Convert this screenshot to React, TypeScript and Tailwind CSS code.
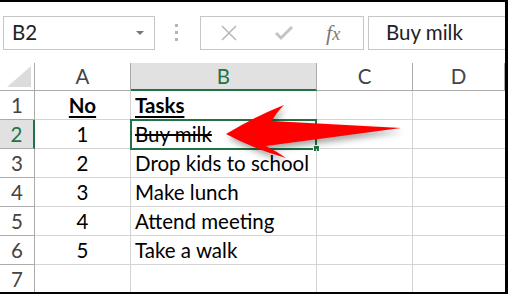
import React from "react";

const rows = [
  { n: 1, a: "No", b: "Tasks", head: true },
  { n: 2, a: "1", b: "Buy milk", done: true },
  { n: 3, a: "2", b: "Drop kids to school" },
  { n: 4, a: "3", b: "Make lunch" },
  { n: 5, a: "4", b: "Attend meeting" },
  { n: 6, a: "5", b: "Take a walk" },
  { n: 7, a: "", b: "" },
];

const cols = ["A", "B", "C", "D"];

function Toolbar() {
  return (
    <div className="flex h-[61px] items-center bg-white pl-[3px]">
      <div className="flex h-[34px] w-[152px] items-center justify-between border border-[#c6c6c6] pl-[8px] pr-[10px] text-[20.5px] text-[#222]">
        <span>B2</span>
        <span className="h-0 w-0 border-x-[4px] border-t-[4px] border-x-transparent border-t-[#777]" />
      </div>
      <div className="ml-[20px] flex flex-col gap-[4px]">
        <span className="h-[3px] w-[3px] bg-[#b5b5b5]" />
        <span className="h-[3px] w-[3px] bg-[#b5b5b5]" />
        <span className="h-[3px] w-[3px] bg-[#b5b5b5]" />
      </div>
      <div className="ml-[22px] flex h-[34px] w-[164px] items-center border border-[#c6c6c6]">
        <svg width="18" height="18" viewBox="0 0 18 18" className="ml-[19px]">
          <path d="M2 2 L16 16 M16 2 L2 16" stroke="#b9b9b9" strokeWidth="1.6" />
        </svg>
        <svg width="20" height="16" viewBox="0 0 20 16" className="ml-[36px]">
          <path d="M2 8 L7 13 L18 2" stroke="#c4c4c4" strokeWidth="3" fill="none" />
        </svg>
        <span className="ml-[32px] font-['Liberation_Serif',serif] text-[22px] italic text-[#7a7a7a]">
          f<span className="text-[18px]">x</span>
        </span>
      </div>
      <div className="ml-[4px] flex h-[34px] flex-1 items-center border border-r-0 border-[#c6c6c6] pl-[17px] text-[20.5px] text-[#222]">
        Buy milk
      </div>
    </div>
  );
}

function Arrow() {
  return (
    <svg
      className="pointer-events-none absolute left-0 top-0"
      width="505"
      height="229"
      viewBox="0 0 505 229"
      style={{ filter: "drop-shadow(2px 4px 3px rgba(0,0,0,0.35))" }}
    >
      <path
        d="M226 71 Q256 53 284 42 Q276 50 272 58 L401 65 L266 83 Q276 88 286 95 Q254 86 226 71 Z"
        fill="#ff0000"
      />
    </svg>
  );
}

export default function App() {
  return (
    <div className="h-[294px] w-[508px] overflow-hidden border-y-2 border-r-[3px] border-black bg-white font-['Lato',sans-serif]">
      <Toolbar />
      <div className="relative">
        <div className="grid grid-cols-[35px_96px_186px_96px_1fr] text-[20.5px]">
          <div className="relative h-[28px] border-r border-b border-[#ababab] bg-white">
            <svg width="24" height="21" className="absolute bottom-[3px] right-[3px]">
              <path d="M24 0 L24 21 L0 21 Z" fill="#dcdcdc" />
            </svg>
          </div>
          {cols.map((c) => (
            <div
              key={c}
              className={`flex h-[28px] items-center justify-center border-r text-[#444] ${
                c === "B"
                  ? "border-b-2 border-r-[#ababab] border-b-[#217346] bg-[#e1e1e1] text-[#217346]"
                  : "border-b border-[#ababab]"
              }`}
            >
              {c}
            </div>
          ))}
          {rows.map((r) => (
            <React.Fragment key={r.n}>
              <div
                className={`flex h-[29px] items-center justify-center border-b border-[#ababab] text-[#444] ${
                  r.n === 2
                    ? "border-r-2 border-r-[#217346] bg-[#e1e1e1] text-[#217346]"
                    : "border-r"
                }`}
              >
                {r.n}
              </div>
              <div
                className={`flex h-[29px] items-center justify-center border-r border-b border-[#d4d4d4] text-black ${
                  r.head ? "font-bold underline underline-offset-[3px]" : ""
                }`}
              >
                {r.a}
              </div>
              <div
                className={`relative flex h-[29px] items-center border-r border-b border-[#d4d4d4] pl-[4px] text-black ${
                  r.head ? "font-bold underline underline-offset-[3px]" : ""
                } ${r.done ? "line-through" : ""}`}
              >
                {r.b}
                {r.done && (
                  <>
                    <div className="absolute -left-[1px] -top-[1px] h-[31px] w-[187px] border-2 border-[#217346]" />
                    <div className="absolute -bottom-[4px] -right-[4px] h-[7px] w-[7px] border border-white bg-[#217346]" />
                  </>
                )}
              </div>
              <div className="h-[29px] border-r border-b border-[#d4d4d4]" />
              <div className="h-[29px] border-b border-[#d4d4d4]" />
            </React.Fragment>
          ))}
        </div>
        <Arrow />
      </div>
    </div>
  );
}
